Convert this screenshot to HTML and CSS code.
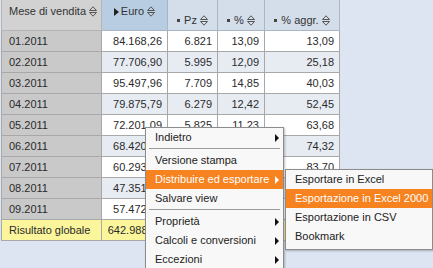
FILE: index.html
```html
<!DOCTYPE html>
<html lang="it">
<head>
    <meta charset="UTF-8">
    <title>Analisi vendite</title>
    <link rel="stylesheet" href="styles.css">
</head>
<body>
    <div class="report">
        <table class="grid">
            <colgroup>
                <col class="c-month">
                <col class="c-euro">
                <col class="c-pz">
                <col class="c-pct">
                <col class="c-aggr">
            </colgroup>
            <thead>
                <tr>
                    <th class="h-dim">Mese di vendita <svg class="sort" viewBox="0 0 8 11"><path d="M0.5 4.5 L4 0.8 L7.5 4.5 Z M0.5 6.5 L7.5 6.5 L4 10.2 Z"/></svg></th>
                    <th class="h-key"><span class="tri"></span>Euro <svg class="sort" viewBox="0 0 8 11"><path d="M0.5 4.5 L4 0.8 L7.5 4.5 Z M0.5 6.5 L7.5 6.5 L4 10.2 Z"/></svg></th>
                    <th class="h-kf"><span class="dot"></span>Pz <svg class="sort" viewBox="0 0 8 11"><path d="M0.5 4.5 L4 0.8 L7.5 4.5 Z M0.5 6.5 L7.5 6.5 L4 10.2 Z"/></svg></th>
                    <th class="h-kf"><span class="dot"></span>% <svg class="sort" viewBox="0 0 8 11"><path d="M0.5 4.5 L4 0.8 L7.5 4.5 Z M0.5 6.5 L7.5 6.5 L4 10.2 Z"/></svg></th>
                    <th class="h-kf"><span class="dot"></span>% aggr. <svg class="sort" viewBox="0 0 8 11"><path d="M0.5 4.5 L4 0.8 L7.5 4.5 Z M0.5 6.5 L7.5 6.5 L4 10.2 Z"/></svg></th>
                </tr>
            </thead>
            <tbody id="rows"></tbody>
            <tfoot>
                <tr>
                    <td class="dim">Risultato globale</td>
                    <td>642.988,11</td>
                    <td></td>
                    <td></td>
                    <td></td>
                </tr>
            </tfoot>
        </table>

        <!-- Context menu -->
        <ul class="menu main-menu">
            <li class="sub">Indietro</li>
            <li class="sep"></li>
            <li>Versione stampa</li>
            <li class="sub active">Distribuire ed esportare</li>
            <li>Salvare view</li>
            <li class="sep"></li>
            <li class="sub">Proprietà</li>
            <li class="sub">Calcoli e conversioni</li>
            <li class="sub">Eccezioni</li>
        </ul>

        <ul class="menu sub-menu">
            <li>Esportare in Excel</li>
            <li class="active">Esportazione in Excel 2000</li>
            <li>Esportazione in CSV</li>
            <li>Bookmark</li>
        </ul>
    </div>

    <script>
        // cells hidden under the menus are left blank
        const data = [
            ['01.2011', '84.168,26', '6.821', '13,09', '13,09'],
            ['02.2011', '77.706,90', '5.995', '12,09', '25,18'],
            ['03.2011', '95.497,96', '7.709', '14,85', '40,03'],
            ['04.2011', '79.875,79', '6.279', '12,42', '52,45'],
            ['05.2011', '72.201,09', '5.825', '11,23', '63,68'],
            ['06.2011', '68.420,54', '', '', '74,32'],
            ['07.2011', '60.293,18', '', '', '83,70'],
            ['08.2011', '47.351,67', '', '', ''],
            ['09.2011', '57.472,72', '', '', '']
        ];

        document.getElementById('rows').innerHTML = data.map((r, i) => `
            <tr class="${i % 2 ? 'alt' : ''}">
                <td class="dim">${r[0]}</td>
                ${r.slice(1).map(v => `<td>${v}</td>`).join('')}
            </tr>`
        ).join('');
    </script>
</body>
</html>
```

FILE: styles.css
```css
* {
    margin: 0;
    padding: 0;
    box-sizing: border-box;
}

body {
    background-color: #dce5f1;
    font-family: "Liberation Sans", Arial, sans-serif;
    font-size: 11px;
    color: #2a2a2a;
}

.report {
    position: relative;
    width: 433px;
    height: 268px;
    overflow: hidden;
}

/* Table */
.grid {
    border-collapse: collapse;
    table-layout: fixed;
    width: 339px;
    margin-left: 1px;
}

.c-month { width: 100px; }
.c-euro { width: 66px; }
.c-pz { width: 50px; }
.c-pct { width: 47px; }
.c-aggr { width: 75px; }

.grid th {
    height: 30px;
    font-weight: normal;
    color: #333;
    border: 1px solid #a9b6c6;
    border-top: none;
    background-color: #d3deea;
    white-space: nowrap;
}

.grid th.h-dim {
    background-color: #d2d2d2;
    border-color: #b4b4b4;
    text-align: left;
    vertical-align: top;
    padding: 5px 0 0 7px;
}

.grid th.h-key {
    background-color: #b9cde2;
    vertical-align: top;
    padding-top: 5px;
}

.grid th.h-kf {
    vertical-align: bottom;
    padding-bottom: 4px;
}

.grid td {
    height: 21px;
    border: 1px solid #a8a8a8;
    background-color: #ffffff;
    text-align: right;
    padding: 0 5px;
    white-space: nowrap;
    overflow: hidden;
}

.grid tr.alt td {
    background-color: #e7ecf3;
}

.grid td.dim,
.grid tr.alt td.dim {
    background-color: #c9c9c9;
    text-align: left;
    padding-left: 7px;
}

.grid tfoot td,
.grid tfoot td.dim {
    background-color: #fbf69c;
}

/* Header icons */
.sort {
    width: 8px;
    height: 11px;
    vertical-align: -2px;
    fill: none;
    stroke: #555;
    stroke-width: 1;
}

.tri {
    display: inline-block;
    width: 0;
    height: 0;
    border-top: 4px solid transparent;
    border-bottom: 4px solid transparent;
    border-left: 5px solid #222;
    margin-right: 2px;
    vertical-align: -1px;
}

.dot {
    display: inline-block;
    width: 3px;
    height: 3px;
    background-color: #444;
    margin-right: 4px;
    vertical-align: 2px;
}

/* Context menus */
.menu {
    position: absolute;
    list-style: none;
    background-color: #f8f8f8;
    border: 1px solid #8c8c8c;
    box-shadow: 1px 1px 2px rgba(0, 0, 0, 0.25);
}

.main-menu {
    left: 145px;
    top: 127px;
    width: 139px;
    padding-bottom: 2px;
}

.sub-menu {
    left: 285px;
    top: 169px;
    width: 148px;
    padding-bottom: 3px;
}

.menu li {
    position: relative;
    height: 19px;
    line-height: 19px;
    padding-left: 9px;
    white-space: nowrap;
    color: #222;
}

.menu li.active {
    background-color: #f68220;
    color: #ffffff;
}

.menu li.sub::after {
    content: "";
    position: absolute;
    right: 4px;
    top: 6px;
    border-top: 4px solid transparent;
    border-bottom: 4px solid transparent;
    border-left: 4px solid #111;
}

.menu li.sub.active::after {
    border-left-color: #ffffff;
}

.menu li.sep {
    height: 4px;
    margin: 0 3px;
    border-top: 1px solid #9a9a9a;
    position: relative;
    top: 1px;
}
```
